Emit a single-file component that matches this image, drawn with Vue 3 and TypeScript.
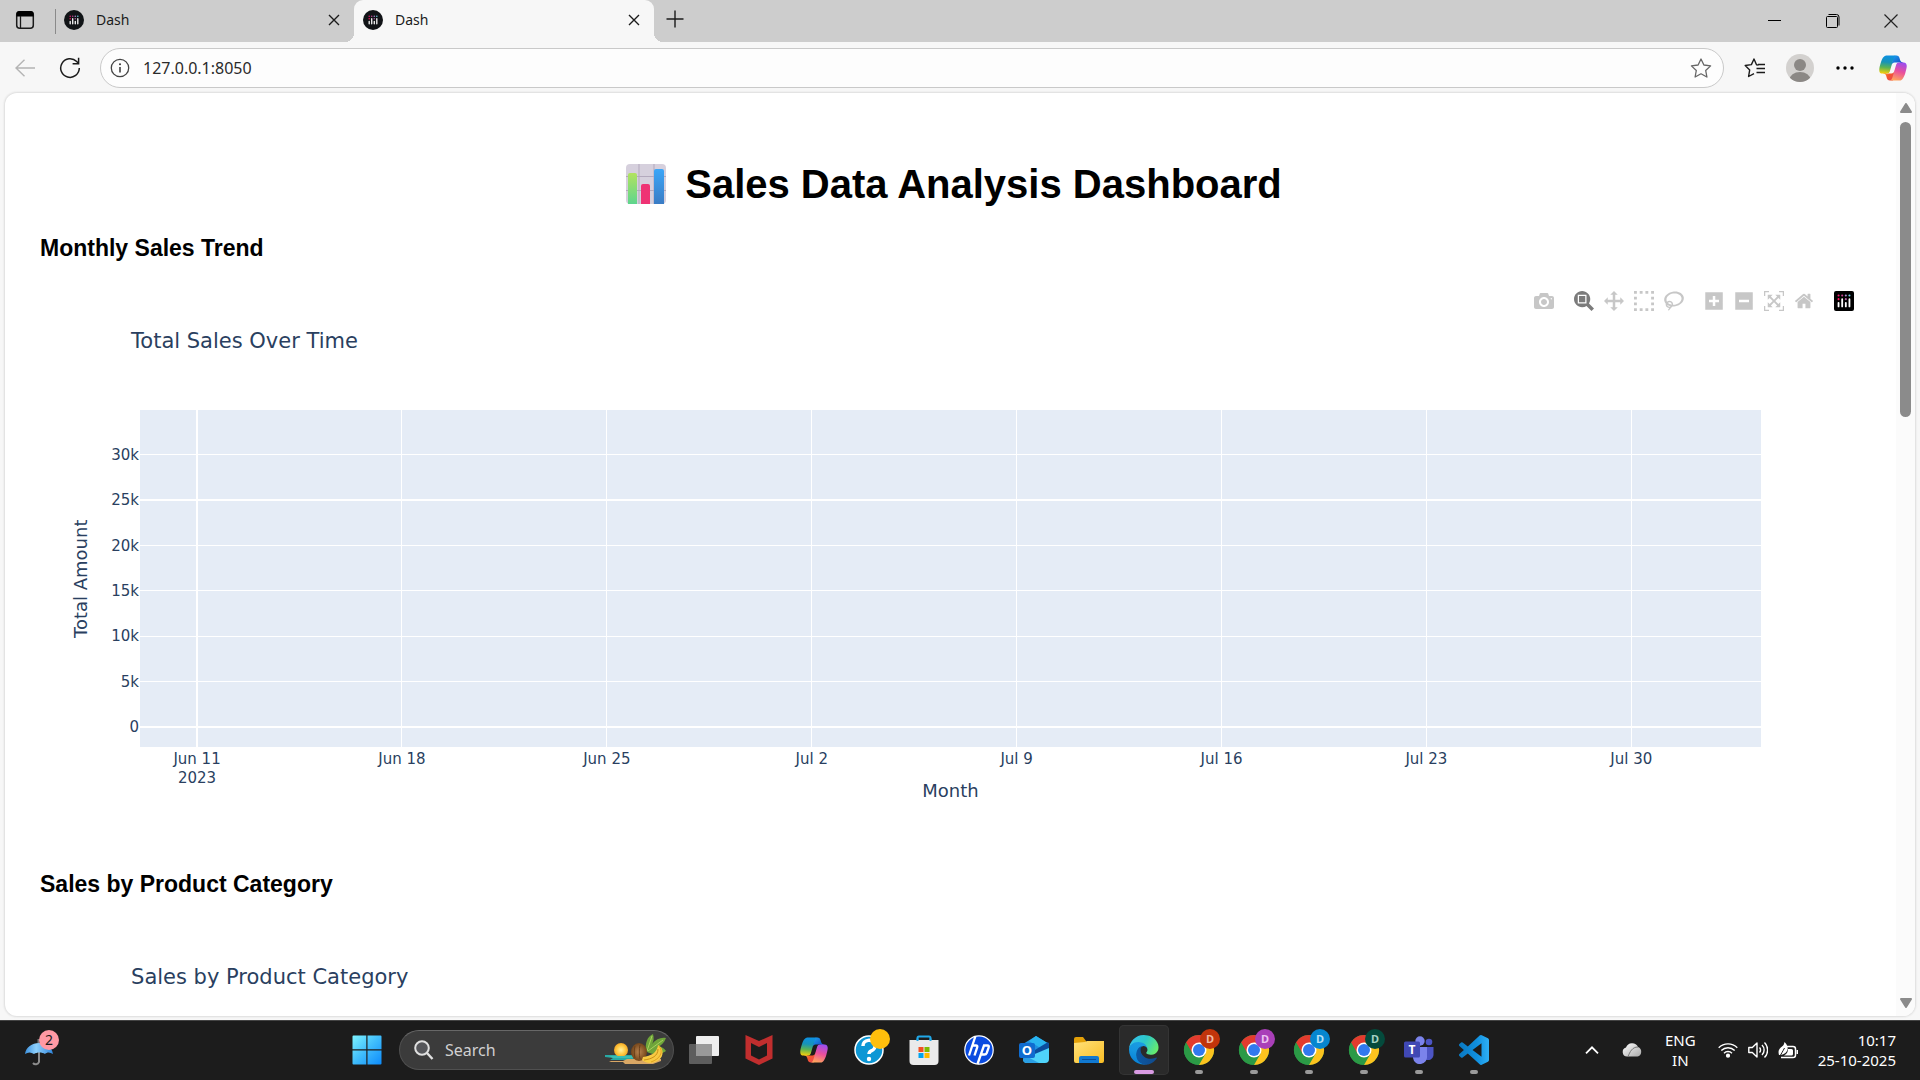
<script setup lang="ts">
import { ref } from 'vue'

interface Tick { label: string; sub?: string; at: number; width: number }
interface ModeButton { name: string; w: number; path: string; active?: boolean }

const address = ref('127.0.0.1:8050')
const query = ref('')

const tabs = [
  { title: 'Dash', active: false },
  { title: 'Dash', active: true },
]

const weeks = ['Jun 11', 'Jun 18', 'Jun 25', 'Jul 2', 'Jul 9', 'Jul 16', 'Jul 23', 'Jul 30']
const xTicks: Tick[] = weeks.map((label, i) => ({
  label,
  sub: i === 0 ? '2023' : undefined,
  at: 3.52 + i * 12.64,
  width: i === 0 ? 2 : 1,
}))

const amounts = ['0', '5k', '10k', '15k', '20k', '25k', '30k']
const yTicks: Tick[] = amounts.map((label, i) => ({
  label,
  at: 94.07 - i * 13.46,
  width: i === 0 || i === 5 ? 2 : 1,
}))

const modeGroups: ModeButton[][] = [
  [
    { name: 'Download plot as a png', w: 1000, path: 'm500 450c-83 0-150-67-150-150 0-83 67-150 150-150 83 0 150 67 150 150 0 83-67 150-150 150z m400 150h-120c-16 0-34 13-39 29l-31 93c-6 15-23 28-40 28h-340c-16 0-34-13-39-28l-31-94c-6-15-23-28-40-28h-120c-55 0-100-45-100-100v-450c0-55 45-100 100-100h800c55 0 100 45 100 100v450c0 55-45 100-100 100z m-400-550c-138 0-250 112-250 250 0 138 112 250 250 250 138 0 250-112 250-250 0-138-112-250-250-250z m365 380c-19 0-35 16-35 35 0 19 16 35 35 35 19 0 35-16 35-35 0-19-16-35-35-35z' },
  ],
  [
    { name: 'Zoom', w: 1000, active: true, path: 'm1000-25l-250 251c40 63 63 138 63 218 0 224-182 406-407 406-224 0-406-182-406-406s183-406 407-406c80 0 155 22 218 62l250-250 125 125z m-812 250l0 438 437 0 0-438-437 0z m62 375l313 0 0-312-313 0 0 312z' },
    { name: 'Pan', w: 1000, path: 'm1000 350l-187 188 0-125-250 0 0 250 125 0-188 187-187-187 125 0 0-250-250 0 0 125-188-188 186-187 0 125 252 0 0-250-125 0 187-188 188 188-125 0 0 250 250 0 0-126 187 188z' },
    { name: 'Box Select', w: 1000, path: 'M0 850v-143h143v143zM286 850v-143h143v143zM571 850v-143h143v143zM857 850v-143h143v143zM0 564v-143h143v143zM857 564v-143h143v143zM0 279v-143h143v143zM857 279v-143h143v143zM0-7v-143h143v143zM286-7v-143h143v143zM571-7v-143h143v143zM857-7v-143h143v143z' },
    { name: 'Lasso Select', w: 1031, path: 'm1018 538c-36 207-290 336-568 286-277-48-473-256-436-463 10-57 36-108 76-151-13-66 11-137 68-183 34-28 75-41 114-42l-55-70 0 0c-2-1-3-2-4-3-10-14-8-34 5-45 14-11 34-8 45 4 1 1 2 3 2 5l0 0 113 140c16 11 31 24 45 40 4 3 6 7 8 11 48-3 100 0 151 9 278 48 473 255 436 462z m-624-379c-80 14-149 48-197 96 42 42 109 47 156 9 33-26 47-66 41-105z m-187-74c-19 16-33 37-39 60 50-32 109-55 174-68-42-25-95-24-135 8z m360 75c-34-7-69-9-102-8 8 62-16 128-68 170-73 59-175 54-244-5-9 20-16 40-20 61-28 159 121 317 333 354s407-60 434-217c28-159-121-318-333-355z' },
  ],
  [
    { name: 'Zoom in', w: 875, path: 'm1 787l0-875 875 0 0 875-875 0z m687-500l-187 0 0-187-125 0 0 187-188 0 0 125 188 0 0 187 125 0 0-187 187 0 0-125z' },
    { name: 'Zoom out', w: 875, path: 'm0 788l0-876 876 0 0 876-876 0z m688-500l-500 0 0 125 500 0 0-125z' },
    { name: 'Autoscale', w: 1000, path: 'm250 850l-187 0-63 0 0-62 0-188 63 0 0 188 187 0 0 62z m688 0l-188 0 0-62 188 0 0-188 62 0 0 188 0 62-62 0z m-875-938l0 188-63 0 0-188 0-62 63 0 187 0 0 62-187 0z m875 188l0-188-188 0 0-62 188 0 62 0 0 62 0 188-62 0z m-125 188l-1 0-93-94-156 156 156 156 92-93 2 0 0 250-250 0 0-2 93-92-156-156-156 156 94 92 0 2-250 0 0-250 0 0 93 93 157-156-157-156-93 94 0 0 0-250 250 0 0 0-94 93 156 157 156-157-93-93 0 0 250 0 0 250z' },
    { name: 'Reset axes', w: 929, path: 'm786 296v-267q0-15-11-26t-25-10h-214v214h-143v-214h-214q-15 0-25 10t-11 26v267q0 1 0 2t0 2l321 264 321-264q1-1 1-4z m124 39l-34-41q-5-5-12-6h-2q-7 0-12 3l-386 322-386-322q-7-4-13-4-7 2-12 7l-35 41q-4 5-3 13t6 12l401 334q18 15 42 15t43-15l136-114v109q0 8 5 13t13 5h107q8 0 13-5t5-13v-227l122-102q5-5 6-12t-4-13z' },
  ],
]

const chromeProfiles = [
  { color: '#c1340b', letter: '#f0b9a5' },
  { color: '#a93fb8', letter: '#ecc3f1' },
  { color: '#0686cf', letter: '#b5e0f7' },
  { color: '#044a3c', letter: '#a5d2c5' },
]
</script>

<template>
  <div class="screen">
    <svg class="defs" aria-hidden="true">
      <defs>
        <linearGradient id="cp1" x1="0" y1="0" x2="1" y2="1"><stop offset="0" stop-color="#1aa7f0" /><stop offset="1" stop-color="#1437bd" /></linearGradient>
        <linearGradient id="cp2" x1="0" y1="0" x2="1" y2="1"><stop offset="0" stop-color="#ffb657" /><stop offset=".5" stop-color="#f4562b" /><stop offset="1" stop-color="#e8435f" /></linearGradient>
        <linearGradient id="cp3" x1=".3" y1="0" x2=".2" y2="1"><stop offset="0" stop-color="#0d91e1" /><stop offset=".35" stop-color="#1793b8" /><stop offset=".65" stop-color="#5bb353" /><stop offset="1" stop-color="#fcd008" /></linearGradient>
        <linearGradient id="cp4" x1=".7" y1="0" x2=".4" y2="1"><stop offset="0" stop-color="#9a4df0" /><stop offset=".5" stop-color="#ea4f9c" /><stop offset="1" stop-color="#ffa45c" /></linearGradient>
        <linearGradient id="edge1" x1="0" y1="0" x2="1" y2="0"><stop offset="0" stop-color="#0c59a4" /><stop offset="1" stop-color="#114a8b" /></linearGradient>
        <linearGradient id="edge2" x1=".6" y1="0" x2=".3" y2="1"><stop offset="0" stop-color="#1b9de2" /><stop offset=".5" stop-color="#1595df" /><stop offset="1" stop-color="#0680d7" /></linearGradient>
        <linearGradient id="edge3" x1="0" y1=".2" x2="1" y2=".6"><stop offset="0" stop-color="#35c1f1" /><stop offset=".5" stop-color="#2dc8c8" /><stop offset="1" stop-color="#66eb6e" /></linearGradient>
        <linearGradient id="win" x1="0" y1="0" x2="1" y2="1"><stop offset="0" stop-color="#7df3ff" /><stop offset=".5" stop-color="#3fbcfb" /><stop offset="1" stop-color="#0d8bfb" /></linearGradient>
        <linearGradient id="emojiGreen" x1="0" y1="0" x2="0" y2="1"><stop offset="0" stop-color="#b2e35f" /><stop offset="1" stop-color="#5ed58e" /></linearGradient>
        <linearGradient id="emojiBlue" x1="0" y1="0" x2="0" y2="1"><stop offset="0" stop-color="#3ba6f8" /><stop offset="1" stop-color="#3a7cc4" /></linearGradient>
        <linearGradient id="umb" x1="0" y1="0" x2="1" y2="0"><stop offset="0" stop-color="#3c92e0" /><stop offset=".4" stop-color="#8fd0fb" /><stop offset="1" stop-color="#2f86dc" /></linearGradient>
        <linearGradient id="sky" x1="0" y1="0" x2="1" y2="1"><stop offset="0" stop-color="#fdfdfd" /><stop offset="1" stop-color="#a9a9a9" /></linearGradient>
        <linearGradient id="folder" x1="0" y1="0" x2="1" y2="1"><stop offset="0" stop-color="#ffe17a" /><stop offset="1" stop-color="#f9bd24" /></linearGradient>
        <linearGradient id="code" x1="0" y1="0" x2="1" y2="0"><stop offset="0" stop-color="#0a78c0" /><stop offset=".6" stop-color="#1090e0" /><stop offset="1" stop-color="#2fb0f6" /></linearGradient>
        <radialGradient id="sun"><stop offset="0" stop-color="#fff1a0" /><stop offset=".6" stop-color="#ffcb45" /><stop offset="1" stop-color="#f4a824" /></radialGradient>
        <radialGradient id="nut"><stop offset="0" stop-color="#b98450" /><stop offset="1" stop-color="#744519" /></radialGradient>
      </defs>
      <symbol id="copilot" viewBox="0 0 48 48">
        <path fill="url(#cp1)" d="M34.142 7.325A4.63 4.63 0 0 0 29.7 4H28.35a4.63 4.63 0 0 0-4.554 3.794L21.48 20.407l.575-1.965a4.63 4.63 0 0 1 4.444-3.33h7.853l3.294 1.282 3.175-1.283h-.926a4.63 4.63 0 0 1-4.443-3.325z" />
        <path fill="url(#cp2)" d="M14.33 40.656A4.63 4.63 0 0 0 18.779 44h2.87a4.63 4.63 0 0 0 4.629-4.51l.312-12.163-.654 2.233a4.63 4.63 0 0 1-4.443 3.329h-7.919l-2.823-1.531-3.057 1.531h.911a4.63 4.63 0 0 1 4.447 3.344z" />
        <path fill="url(#cp3)" d="M29.5 4H13.46c-4.583 0-7.332 6.057-9.165 12.113C2.123 23.29-.72 32.885 7.503 32.885h6.925a4.63 4.63 0 0 0 4.456-3.358 2078.617 2078.617 0 0 1 4.971-17.156c.843-2.843 1.544-5.284 2.621-6.805C27.08 4.714 28.086 4 29.5 4z" />
        <path fill="url(#cp4)" d="M18.498 44h16.04c4.582 0 7.332-6.058 9.165-12.115 2.171-7.177 5.013-16.775-3.208-16.775h-6.926a4.63 4.63 0 0 0-4.456 3.358 2084.036 2084.036 0 0 1-4.972 17.16c-.842 2.844-1.543 5.285-2.62 6.806-.604.852-1.61 1.566-3.023 1.566z" />
      </symbol>
      <symbol id="plotly" viewBox="0 0 132 132">
        <g fill="none" stroke="#fff" stroke-width="12" stroke-linecap="round">
          <path d="M30 78v24M54 54v48M78 78v24M102 54v48" />
        </g>
        <circle cx="30" cy="30" r="7" fill="#ee1c72" /><circle cx="54" cy="30" r="7" fill="#c74394" /><circle cx="78" cy="30" r="7" fill="#a98fd0" /><circle cx="102" cy="30" r="7" fill="#6fd3e8" />
        <circle cx="30" cy="54" r="7" fill="#ff0f5c" /><circle cx="78" cy="54" r="7" fill="#b55aa8" />
      </symbol>
    </svg>

    <header class="tab-strip">
      <button class="tab-actions" aria-label="Tab actions menu">
        <svg width="20" height="20" viewBox="0 0 20 20"><rect x="1.7" y="1.7" width="16.6" height="16.6" rx="3" fill="none" stroke="#1b1b1b" stroke-width="1.5" /><path d="M1.5 6.5V4a3 3 0 0 1 3-3h11a3 3 0 0 1 3 3v2.5z" fill="#000" /><path d="M5.5 6v12" stroke="#1b1b1b" stroke-width="1.3" /></svg>
      </button>
      <div v-for="(tab, i) in tabs" :key="i" class="tab" :class="{ active: tab.active }">
        <svg class="favicon" width="20" height="20" viewBox="0 0 20 20"><circle cx="10" cy="10" r="10" fill="#111417" /><use href="#plotly" x="3" y="3" width="14" height="14" /></svg>
        <span class="tab-title">{{ tab.title }}</span>
        <button class="tab-close" aria-label="Close tab"><svg width="12" height="12" viewBox="0 0 12 12"><path d="M1 1l10 10M11 1L1 11" stroke="#1b1b1b" stroke-width="1.4" /></svg></button>
      </div>
      <button class="new-tab" aria-label="New tab"><svg width="18" height="18" viewBox="0 0 18 18"><path d="M9 .5v17M.5 9h17" stroke="#1b1b1b" stroke-width="1.4" /></svg></button>
      <div class="window-controls">
        <button aria-label="Minimize"><svg width="14" height="14"><path d="M0 6.5h13" stroke="#000" /></svg></button>
        <button aria-label="Restore"><svg width="14" height="14" viewBox="0 0 14 14" fill="none" stroke="#000"><rect x=".5" y="2.5" width="11" height="11" rx="1" /><path d="M2.5 .5h8a2.5 2.5 0 0 1 2.5 2.5v8.5" /></svg></button>
        <button aria-label="Close"><svg width="14" height="14"><path d="M.5 .5l13 13M13.5 .5l-13 13" stroke="#222" stroke-width="1.2" /></svg></button>
      </div>
    </header>

    <nav class="toolbar">
      <button class="tool" aria-label="Back"><svg width="20" height="18" viewBox="0 0 20 18" fill="none" stroke="#b4b4b4" stroke-width="1.4"><path d="M20 9H1M9.5 .7L1 9l8.5 8.3" /></svg></button>
      <button class="tool" aria-label="Refresh"><svg width="22" height="22" viewBox="0 0 22 22" fill="none" stroke="#1b1b1b" stroke-width="1.5"><path d="M20.3 11a9.3 9.3 0 1 1-2.6-6.4L19.5 6.5" /><path d="M19.6 .8v6h-6" /></svg></button>
      <div class="address">
        <svg width="20" height="20" viewBox="0 0 20 20"><circle cx="10" cy="10" r="8.7" fill="none" stroke="#444" stroke-width="1.3" /><path d="M10 9v5.5" stroke="#333" stroke-width="1.5" /><circle cx="10" cy="6.3" r="1" fill="#333" /></svg>
        <input v-model="address" type="text" aria-label="Address and search bar">
        <button aria-label="Add to favorites"><svg width="22" height="20" viewBox="0 0 22 20"><path d="M11 1l2.9 6 6.7.9-4.9 4.6 1.2 6.5-5.9-3.2L5.100 19l1.200-6.5L1.400 7.900 8.100 7z" fill="none" stroke="#666" stroke-width="1.3" stroke-linejoin="round" /></svg></button>
      </div>
      <button class="tool" aria-label="Favorites"><svg width="22" height="20" viewBox="0 0 22 20" fill="none" stroke="#1b1b1b" stroke-width="1.4" stroke-linejoin="round"><path d="M14.5 7l-2-.3L10 1 7.400 6.600 1.200 7.500l4.500 4.400L4.600 18.500 10 15.600" /><path d="M12.5 10.500h8.500M12.5 14.500h8.500M14 6.500h7" /></svg></button>
      <button class="tool" aria-label="Profile"><svg width="28" height="28" viewBox="0 0 28 28"><clipPath id="av"><circle cx="14" cy="14" r="14" /></clipPath><g clip-path="url(#av)"><path fill="#d3d1cf" d="M0 0h28v28H0z" /><circle cx="14" cy="11" r="6" fill="#8b8885" /><ellipse cx="14" cy="26" rx="10.5" ry="8" fill="#8b8885" /></g></svg></button>
      <button class="tool" aria-label="Settings and more"><svg width="18" height="4"><circle cx="2" cy="2" r="1.7" /><circle cx="9" cy="2" r="1.7" /><circle cx="16" cy="2" r="1.7" /></svg></button>
      <button class="tool copilot-tool" aria-label="Copilot"><svg width="30" height="30"><use href="#copilot" width="30" height="30" /></svg></button>
    </nav>

    <div class="page-frame">
      <main class="page">
        <h1>
          <svg width="55" height="42" viewBox="0 0 55 42" role="img" aria-label="Bar chart">
            <rect x="7" y="1" width="40" height="40" rx="4" fill="#d6d0dd" /><path d="M20 1v40M35 1v40M7 13.5h40M7 27.5h40" stroke="#b3a9bd" />
            <path d="M9 41V12a2 2 0 0 1 2-2h5a2 2 0 0 1 2 2v29z" fill="url(#emojiGreen)" /><path d="M22 41V23a2 2 0 0 1 2-2h5a2 2 0 0 1 2 2v18z" fill="#ef3274" /><path d="M35 41V8a2 2 0 0 1 2-2h6a2 2 0 0 1 2 2v33z" fill="url(#emojiBlue)" />
          </svg>
          <span>Sales Data Analysis Dashboard</span>
        </h1>

        <section>
          <h3>Monthly Sales Trend</h3>
          <div class="chart">
            <div class="modebar">
              <div v-for="(group, g) in modeGroups" :key="g" class="mode-group">
                <button v-for="b in group" :key="b.name" :aria-label="b.name" :class="{ on: b.active }">
                  <svg :viewBox="`0 0 ${b.w} 1000`" height="20" width="20"><path transform="matrix(1 0 0 -1 0 850)" :d="b.path" /></svg>
                </button>
              </div>
              <div class="mode-group">
                <a href="https://plotly.com/" aria-label="Produced with Plotly"><svg width="20" height="20"><rect width="20" height="20" rx="2" fill="#000" /><use href="#plotly" width="20" height="20" /></svg></a>
              </div>
            </div>
            <div class="chart-title">Total Sales Over Time</div>
            <div class="plot-row">
              <div class="y-title">Total Amount</div>
              <svg class="plot">
                <rect width="100%" height="100%" fill="#e5ecf6" />
                <g v-for="t in xTicks" :key="t.label">
                  <line :x1="`${t.at}%`" :x2="`${t.at}%`" y1="0" y2="100%" :stroke-width="t.width" />
                  <text :x="`${t.at}%`" y="100%" dy="17" text-anchor="middle">{{ t.label }}</text>
                  <text v-if="t.sub" :x="`${t.at}%`" y="100%" dy="36" text-anchor="middle">{{ t.sub }}</text>
                </g>
                <g v-for="t in yTicks" :key="t.label">
                  <line x1="0" x2="100%" :y1="`${t.at}%`" :y2="`${t.at}%`" :stroke-width="t.width" />
                  <text x="-1" :y="`${t.at}%`" dy="5" text-anchor="end">{{ t.label }}</text>
                </g>
              </svg>
            </div>
            <div class="x-title">Month</div>
          </div>
        </section>

        <section>
          <h3>Sales by Product Category</h3>
          <div class="chart">
            <div class="modebar" />
            <div class="chart-title">Sales by Product Category</div>
          </div>
        </section>
      </main>
      <div class="scrollbar" aria-hidden="true">
        <svg width="12" height="10"><path d="M6 1l5 8H1z" fill="#8b8b8b" stroke="#8b8b8b" stroke-width="2" stroke-linejoin="round" /></svg>
        <div class="track"><div class="thumb" /></div>
        <svg width="12" height="10"><path d="M6 9L1 1h10z" fill="#8b8b8b" stroke="#8b8b8b" stroke-width="2" stroke-linejoin="round" /></svg>
      </div>
    </div>

    <footer class="taskbar">
      <div class="widgets">
        <button aria-label="Widgets">
          <svg width="36" height="42" viewBox="0 0 36 42">
            <path d="M15 21v13a3.5 3.5 0 0 1-6 1" fill="none" stroke="#8c8c8c" stroke-width="2" /><path d="M14.5 11v5" stroke="#777" stroke-width="2" />
            <path d="M1 26c1-7 7-11 14-11s13 4 14 11c-3-2-6-2-8 0-3-2-8-2-11 0-3-2-6-2-9 0z" fill="url(#umb)" />
            <circle cx="25" cy="12" r="10" fill="#ff99a4" /><text x="25" y="17" text-anchor="middle" font-size="14" fill="#1b1b1b">2</text>
          </svg>
        </button>
      </div>
      <div class="apps">
        <button class="app" aria-label="Start"><svg width="30" height="30" viewBox="0 0 30 30"><path fill="url(#win)" d="M1.500 .5h12.800v13.800H.5V1.500a1 1 0 0 1 1-1zM15.500 .5h13a1 1 0 0 1 1 1v12.800h-14zM.5 15.500h13.800v14H1.500a1 1 0 0 1-1-1zM15.500 15.500h14v13a1 1 0 0 1-1 1h-13z" /></svg></button>
        <label class="search">
          <svg width="20" height="20" viewBox="0 0 20 20" fill="#55565a" stroke="#e0e0e0" stroke-width="2"><circle cx="8" cy="8" r="6.8" /><path d="M13 13l5.5 6" stroke-width="2.4" /></svg>
          <input v-model="query" type="search" placeholder="Search" aria-label="Search">
          <svg width="62" height="32" viewBox="0 0 62 32">
            <path d="M0 21h36v5H5l3-2-8-1z" fill="#28a9a4" /><circle cx="16" cy="16" r="7" fill="url(#sun)" /><path d="M4 22h30v2H8z" fill="#3cbdb2" /><path d="M4 27h14l4-2h34v2l-8 3H20l-2-2H6z" fill="#d9a765" />
            <path d="M41 17C40 9 42 3 48 0c1 4 1 7-1 10 4-5 9-7 14-6-2 5-5 8-9 9 4-1 7 1 9 4-4 3-14 5-20 0z" fill="#6fa53a" />
            <path d="M42 17L47 2M43 17l15-11" stroke="#a9d25e" />
            <ellipse cx="34" cy="18" rx="8" ry="9" fill="url(#nut)" /><path d="M30 12c-1 4-1 8 0 12M35 11c-1 4-1 10 0 14" stroke="#6a3f1a" fill="none" />
            <path d="M53 11c6 3 6 11 1 15-5 4-13 4-17 0l1-3c8-1 14-4 15-12z" fill="#f8ca43" /><path d="M53 15c0 7-6 10-14 11" fill="none" stroke="#c98e17" /><path d="M54 12c5 6 1 13-8 16" fill="none" stroke="#e0a021" />
          </svg>
        </label>
        <button class="app" aria-label="Task view"><svg width="30" height="28"><rect x="7" width="23" height="20" rx="1" fill="#eee" /><rect y="8" width="23" height="20" rx="1" fill="#5d5d5d" /><path d="M7 8h16v12H7z" fill="#999" /></svg></button>
        <button class="app" aria-label="McAfee"><svg width="28" height="30" viewBox="0 0 28 30"><path fill="#c12e2e" fill-rule="evenodd" d="M.5 0L14 6 27.500 0v23.500L14 30 .5 23.500zM6 8v12.500L14 24.500l8-4V8l-8 4z" /></svg></button>
        <button class="app" aria-label="Copilot"><svg width="30" height="30"><use href="#copilot" width="30" height="30" /></svg></button>
        <button class="app" aria-label="Get help"><svg class="spill" width="30" height="30" viewBox="0 0 30 30"><circle cx="15" cy="15" r="14" fill="#0d97d5" stroke="#fff" stroke-width="1.5" /><path d="M9 11a6 5.500 0 1 1 8 5q-2 1-2 3" fill="none" stroke="#fff" stroke-width="3.5" /><circle cx="15" cy="24" r="2.2" fill="#fff" /><circle cx="26" cy="4" r="10" fill="#ffbf0c" /></svg></button>
        <button class="app" aria-label="Microsoft Store"><svg width="30" height="30" viewBox="0 0 30 30"><path d="M8.500 7V3a1.500 1.500 0 0 1 1.500-1.500h10A1.500 1.500 0 0 1 21.500 3v4" fill="none" stroke="#20a8e8" stroke-width="2" /><path d="M.5 5h29v21a4 4 0 0 1-4 4h-21a4 4 0 0 1-4-4z" fill="#eaeaea" /><path d="M8.500 6V3.500M21.500 6V3.500" stroke="#20a8e8" stroke-width="2" /><path fill="#f25022" d="M9.500 12H14.500v5h-5z" /><path fill="#7fba00" d="M15.500 12h5v5h-5z" /><path fill="#00a4ef" d="M9.500 18h5v5h-5z" /><path fill="#ffb900" d="M15.500 18h5v5h-5z" /></svg></button>
        <button class="app" aria-label="HP"><svg width="30" height="30" viewBox="0 0 30 30"><circle cx="15" cy="15" r="14.2" fill="#0a4be0" stroke="#fff" stroke-width="1.2" /><g fill="none" stroke="#fff" stroke-width="2.3"><path d="M11.500 1L5 20.500M8.500 10.500h3.500q1.800 0 1.200 1.800L10.500 20.500M13.500 29L20 10.500h3.500q1.800 0 1.200 1.800l-2 5.700q-.6 1.500-2.200 1.500h-3" /></g></svg></button>
        <button class="app" aria-label="Outlook"><svg width="30" height="28" viewBox="0 0 30 28"><path d="M4 8L17 0l13 8v4L17 20 4 15z" fill="#1f8fe0" /><path d="M10 5l7-5 13 8-7 5z" fill="#29b5f0" /><path d="M11 17L29 6l1 2v6L17 22z" fill="#0a4d9e" /><path d="M30 12v11a4 4 0 0 1-4 4H8a4 4 0 0 1-4-4z" fill="#4fd3fa" /><path d="M5 19l15 8H8a4 4 0 0 1-4-4z" fill="#2a9fe5" /><rect y="7" width="16" height="15" rx="2" fill="#0f6cd0" /><text x="8" y="19" text-anchor="middle" font-size="13" font-weight="700" fill="#fff">O</text></svg></button>
        <button class="app" aria-label="File Explorer"><svg width="30" height="28" viewBox="0 0 30 28"><path d="M0 10V3a2 2 0 0 1 2-2h7l3 4v5z" fill="#e3a008" /><path d="M0 7l11-1 2-1h17v20a2 2 0 0 1-2 2H2a2 2 0 0 1-2-2z" fill="url(#folder)" /><path d="M5 27v-5a2 2 0 0 1 2-2h16a2 2 0 0 1 2 2v5z" fill="#1179d1" /><path d="M8 23.500h14" stroke="#0a4f9a" /></svg></button>
        <button class="app current" aria-label="Microsoft Edge"><svg width="30" height="30" viewBox="0 0 260 260"><path fill="url(#edge2)" d="M105.730 241.420A79.200 79.200 0 0 1 83 220.080a80.720 80.720 0 0 1 29.500-120.750c3.120-1.470 8.450-4.130 15.540-4a32.350 32.350 0 0 1 25.690 13 31.880 31.880 0 0 1 6.360 18.660c0-.21 24.460-79.600-80-79.600-43.900 0-80 41.660-80 78.210a130.150 130.150 0 0 0 12.110 56 128 128 0 0 0 156.380 67.110 75.550 75.550 0 0 1-62.780-8z" /><path fill="url(#edge1)" d="M235.680 195.460a93.730 93.730 0 0 1-10.540 4.710 101.870 101.870 0 0 1-35.900 6.460c-47.320 0-88.540-32.550-88.540-74.320A31.480 31.480 0 0 1 117.130 98c-42.800 1.800-53.800 46.400-53.800 72.530 0 73.880 68.090 87 82.760 87 7.910 0 19.840-2.300 27-4.560a128.340 128.340 0 0 0 67.910-51.870 4 4 0 0 0-5.320-5.640z" /><path fill="url(#edge3)" d="M152.330 148.860c-.81 1-3.300 2.500-3.300 5.660 0 2.610 1.700 5.120 4.720 7.230 14.380 10 41.490 8.680 41.560 8.680a59.560 59.560 0 0 0 30.270-8.350A61.380 61.380 0 0 0 256 109.200c.26-22.410-8-37.310-11.340-43.910C223.460 23.840 177.720 0 128 0A128 128 0 0 0 0 126.200c.48-36.540 36.800-66.050 80-66.050 3.500 0 23.460.34 42 10.070 16.340 8.580 24.900 18.940 30.850 29.210 6.180 10.670 7.280 24.150 7.280 29.520s-2.740 13.330-7.800 19.910z" /></svg></button>
        <button v-for="p in chromeProfiles" :key="p.color" class="app running" aria-label="Google Chrome">
          <svg class="spill" width="30" height="30" viewBox="0 0 30 30">
            <circle cx="15" cy="15" r="15" fill="#2b9a46" /><path d="M15 15L2 7.500A15 15 0 0 1 28 7.500z" fill="#e33b2e" /><path d="M15 7.500h13A15 15 0 0 1 15 30l6.500-11.200z" fill="#fcc31e" /><path d="M15 15L8.500 18.700 2 7.500h7z" fill="#e33b2e" /><path d="M2 7.500l6.500 11.200L15 30A15 15 0 0 1 2 7.500z" fill="#2b9a46" />
            <circle cx="15" cy="15" r="7.5" fill="#fff" /><circle cx="15" cy="15" r="6" fill="#3179ee" />
            <circle cx="26" cy="4" r="10" :fill="p.color" /><text x="26" y="8" text-anchor="middle" font-size="11" font-weight="700" :fill="p.letter">D</text>
          </svg>
        </button>
        <button class="app running" aria-label="Microsoft Teams"><svg width="30" height="28" viewBox="0 0 30 28"><circle cx="25" cy="6" r="3.3" fill="#4d55c4" /><path d="M19 11h10.500v8a5.500 5.500 0 0 1-8 4.500z" fill="#4d55c4" /><circle cx="16" cy="5" r="4.7" fill="#7b83eb" /><path d="M9 11h14v9a7 7 0 0 1-14 2z" fill="#7b83eb" /><rect y="5.5" width="16" height="16" rx="1.5" fill="#4048b4" /><text x="8" y="18" text-anchor="middle" font-size="12" font-weight="700" fill="#fff">T</text></svg></button>
        <button class="app running" aria-label="Visual Studio Code"><svg width="30" height="30" viewBox="0 0 100 100"><path fill="url(#code)" d="M96.460 10.800 75.860.87a6.230 6.230 0 0 0-7.100 1.200L29.360 38.040 12.190 25.010a4.160 4.160 0 0 0-5.320.24l-5.500 5.010a4.170 4.170 0 0 0 0 6.160L16.250 50 1.360 63.580a4.170 4.170 0 0 0 0 6.160l5.500 5.010c1.500 1.360 3.720 1.460 5.330.24l17.170-13.030 39.400 35.950a6.220 6.220 0 0 0 7.100 1.200l20.600-9.900a6.250 6.250 0 0 0 3.540-5.630V16.420c0-2.400-1.380-4.600-3.540-5.620zM75.010 72.700 45.110 50l29.900-22.700z" /></svg></button>
      </div>
      <div class="tray">
        <button aria-label="Show hidden icons"><svg width="14" height="8" fill="none" stroke="#fff" stroke-width="1.8"><path d="M1 7.300l6-6 6 6" /></svg></button>
        <button class="cloud" aria-label="OneDrive"><svg width="20" height="14" viewBox="0 0 20 14"><path d="M5 13.500a4.600 4.600 0 0 1-1-9 6.500 6.500 0 0 1 12-.5 5 5 0 0 1-.5 9.500z" fill="url(#sky)" /><path d="M6 13.500C8 9 10 4 16 4" stroke="#777" fill="none" /></svg></button>
        <button class="lang">ENG<br>IN</button>
        <button class="status" aria-label="Network, volume, battery">
          <svg width="20" height="16" viewBox="0 0 20 16" fill="none" stroke="#fff" stroke-width="1.4"><path d="M.7 5.700a13.200 13.200 0 0 1 18.600 0M3.300 8.500a9.500 9.500 0 0 1 13.400 0M6 11.200a5.700 5.700 0 0 1 8 0" /><circle cx="10" cy="13.7" r="1.4" fill="#fff" /></svg>
          <svg width="20" height="18" viewBox="0 0 20 18" fill="none" stroke="#fff" stroke-width="1.4"><path d="M.8 6.500h3.500L9 2v14l-4.700-4.500H.8z" stroke-linejoin="round" /><path d="M11.500 6.500a3.500 3.500 0 0 1 0 5M14 4a7 7 0 0 1 0 10M16.500 1.500a10.600 10.600 0 0 1 0 15" /></svg>
          <svg width="20" height="17" viewBox="0 0 20 17"><path d="M9 4.500h6a2.500 2.500 0 0 1 2.500 2.500v6a2.500 2.500 0 0 1-2.500 2.500H3" fill="none" stroke="#fff" stroke-width="1.5" /><path d="M18.500 8h1.500v4h-1.500z" fill="#fff" /><path d="M10 7h3.500q1.500 0 1.500 1.500V12q0 1.500-1.500 1.500H6q4-2 4-6.500z" fill="#fff" /><path d="M6.500 0c3 3 4 6 2.500 9S3 13.500 1 13C-.5 8 2 6 4 4.500S6 2 6.500 0z" fill="#fff" /><path d="M1 16C3 12 5 9 6.500 6" stroke="#1c1c1c" fill="none" /></svg>
        </button>
        <button class="clock">10:17<br>25-10-2025</button>
      </div>
    </footer>
  </div>
</template>

<style>
body { margin: 0; overflow: hidden; }
</style>

<style scoped>
.screen { display: flex; flex-direction: column; height: 100vh; background: #f7f7f7; font-family: "Noto Sans", "Open Sans", sans-serif; color: #1b1b1b; overflow: hidden; }
.defs { position: absolute; width: 0; height: 0; }
button { border: 0; background: none; padding: 0; margin: 0; color: inherit; font: inherit; display: flex; align-items: center; justify-content: center; }
svg { display: block; flex: none; }

.tab-strip { display: flex; height: 42px; background: #cdcdcd; flex: none; }
.tab-actions { width: 54px; padding: 0 4px 2px 0; }
.tab { position: relative; display: flex; align-items: center; flex: 0 1 300px; box-sizing: border-box; padding: 0 14px 3px 10px; }
.tab:not(.active)::before { content: ""; position: absolute; left: 1px; top: 9px; width: 1px; height: 25px; background: #8a8a8a; }
.tab.active { background: #f7f7f7; border-radius: 9px 9px 0 0; padding-left: 9px; }
.tab.active::before, .tab.active::after { content: ""; position: absolute; bottom: 0; width: 9px; height: 9px; }
.tab.active::before { left: -9px; background: radial-gradient(circle at 0 0, #cdcdcd 9px, #f7f7f7 9px); }
.tab.active::after { right: -9px; background: radial-gradient(circle at 100% 0, #cdcdcd 9px, #f7f7f7 9px); }
.tab-title { margin-left: 12px; font-size: 14px; flex: 1; }
.new-tab { width: 42px; padding-bottom: 4px; }
.window-controls { margin-left: auto; display: flex; }
.window-controls button { width: 58px; }

.toolbar { display: flex; align-items: center; height: 51px; flex: none; padding: 0 5px 0 2px; }
.tool { width: 45px; height: 40px; }
.address { flex: 1; display: flex; align-items: center; height: 40px; box-sizing: border-box; border: 1px solid #c9c9c9; border-radius: 20px; background: #fdfdfd; margin: 0 8px; padding: 0 11px 0 9px; }
.address input { flex: 1; border: 0; outline: 0; background: none; font: inherit; font-size: 16px; color: #2b2b2b; padding: 0; margin-left: 13px; }
.copilot-tool { margin-left: 3px; }

.page-frame { flex: 1; min-height: 0; display: flex; margin: 0 5px 4px; border-radius: 12px; background: #fff; overflow: hidden; box-shadow: 0 0 2px 1px #dcdcdc; }
.page { flex: 1; min-width: 0; overflow: hidden; padding: 68px 35px 0; font-family: "Liberation Sans", Arial, sans-serif; color: #000; }
h1 { display: flex; justify-content: center; align-items: center; gap: 11px; font-size: 40px; line-height: 46px; margin: 0 0 28px; }
h3 { font-size: 23px; line-height: 27px; margin: 0 0 23px; }
section { margin-bottom: 24px; }
.chart { height: 562px; font-family: "DejaVu Sans", Verdana, sans-serif; color: #2a3f5f; display: flex; flex-direction: column; }
.modebar { display: flex; justify-content: flex-end; gap: 10px; height: 32px; padding-right: 2px; box-sizing: border-box; }
.mode-group { display: flex; align-items: center; }
.mode-group button, .mode-group a { padding: 0 5px; }
.mode-group path { fill: #c7c7c7; }
.mode-group .on path { fill: #7b7b7b; }
.chart-title { font-size: 21px; line-height: 26px; margin: 11px 0 0 5%; }
.plot-row { display: flex; height: 337px; margin: 56px 100px 0 0; }
.y-title { width: 100px; box-sizing: border-box; writing-mode: vertical-rl; transform: rotate(180deg); text-align: center; font-size: 18px; line-height: 20px; padding: 0 31px 0 49px; }
.plot { flex: 1; min-width: 0; height: 337px; overflow: visible; font-size: 15px; fill: #2a3f5f; }
.plot line { stroke: #fff; shape-rendering: crispEdges; }
.x-title { font-size: 18px; line-height: 22px; margin-top: 33px; text-align: center; }

.scrollbar { width: 19px; display: flex; flex-direction: column; align-items: center; background: #fbfbfb; padding: 10px 0 8px; box-sizing: border-box; }
.track { flex: 1; width: 11px; padding: 9px 0; }
.thumb { height: 34%; border-radius: 6px; background: #8b8b8b; }

.taskbar { display: flex; align-items: center; height: 60px; flex: none; box-sizing: border-box; border-top: 1px solid #444; background: #1c1c1c; color: #fff; padding-bottom: 1px; }
.widgets { flex: 0 0 318px; padding: 0 0 2px 24px; }
.apps { display: flex; align-items: center; gap: 5px; }
.app { position: relative; width: 50px; height: 50px; border-radius: 5px; }
.app.current { background: #2a2a2a; box-shadow: inset 0 0 0 1px #343434; }
.app.running::after, .app.current::after { content: ""; position: absolute; bottom: 1px; left: 21px; width: 8px; height: 4px; border-radius: 2px; background: #9a9a9a; }
.app.current::after { left: 15px; width: 20px; background: #d99be3; }
.spill { overflow: visible; }
.search { display: flex; align-items: center; width: 275px; height: 40px; box-sizing: border-box; margin-left: 2px; border: 1px solid #505050; border-top-color: #676767; border-radius: 20px; background: #3b3b3b; padding: 0 6px 0 14px; }
.search input { flex: 1; min-width: 0; border: 0; outline: 0; background: none; font: inherit; font-size: 16px; color: #fff; margin-left: 11px; padding: 0; }
.search input::placeholder { color: #d0d0d0; opacity: 1; }
.tray { margin-left: auto; display: flex; align-items: center; font-size: 15px; line-height: 20px; padding-right: 24px; }
.cloud { margin-left: 23px; }
.lang { margin-left: 23px; text-align: center; }
.status { gap: 10px; margin-left: 22px; }
.clock { margin-left: 20px; text-align: right; }
</style>
